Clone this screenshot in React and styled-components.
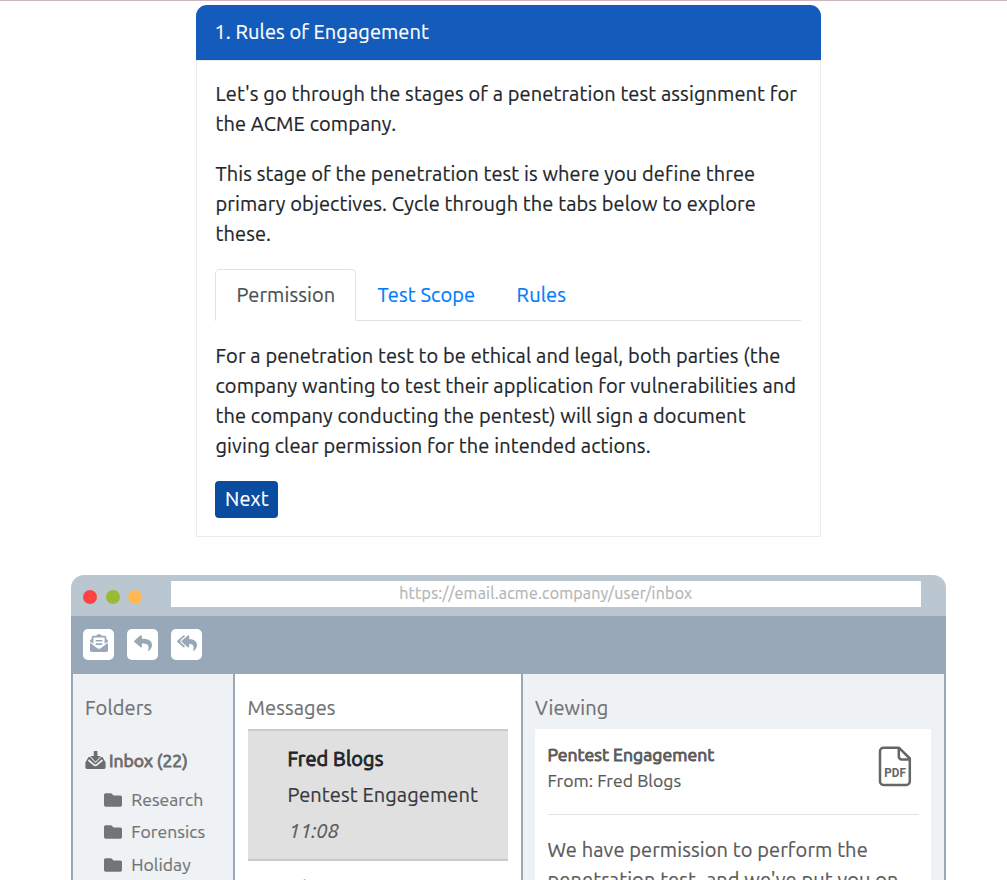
import React from "react";
import styled, { createGlobalStyle, css } from "styled-components";
import { FaEnvelopeOpenText, FaReply, FaReplyAll, FaFolder } from "react-icons/fa";

const GlobalStyle = createGlobalStyle`
  * { box-sizing: border-box; }
  html, body, #root { height: 100%; }
  body {
    margin: 0;
    overflow: hidden;
    background: #fff;
    color: #212529;
    font-family: Ubuntu, "Noto Sans", sans-serif;
    font-size: 20px;
    line-height: 30px;
    letter-spacing: 0.11px;
    -webkit-text-stroke: 0.2px;
  }
`;

const heavy = css`
  font-weight: 400;
  -webkit-text-stroke: 0.9px;
`;

const Page = styled.main`
  height: 880px;
  overflow: hidden;
  border-top: 1px solid #cdb5bd;
  padding-top: 4px;
  display: flex;
  flex-direction: column;
`;

const Card = styled.section`
  flex: none;
  width: 625px;
  height: 532px;
  margin-left: 196px;
  display: flex;
  flex-direction: column;
`;

const CardHeader = styled.header`
  height: 55px;
  padding: 12px 18.5px;
  background: #145cbb;
  color: #fff;
  letter-spacing: 0.08px;
  border-radius: 11px 11px 0 0;
`;

const CardBody = styled.div`
  flex: 1;
  padding: 18px 19px 0 18px;
  border: 1px solid #ebebeb;
`;

const Line = styled.span`
  display: block;
  white-space: nowrap;
`;

const Paragraph = styled.p`
  margin: 0 0 20px 0.5px;
`;

const Tabs = styled.nav`
  display: flex;
  height: 52px;
  margin-bottom: 20px;
  border-bottom: 1px solid #dee2e6;
`;

const Tab = styled.a`
  height: 52px;
  width: ${(p) => p.$width}px;
  padding: 10px 0 0 20.6px;
  color: ${(p) => (p.$active ? "#495057" : "#007bff")};
  border: 1px solid ${(p) => (p.$active ? "#dee2e6" : "transparent")};
  border-bottom-color: ${(p) => (p.$active ? "#fff" : "transparent")};
  border-radius: 5px 5px 0 0;
`;

const NextButton = styled.button`
  display: block;
  width: 63px;
  height: 37px;
  padding: 0 0 1px 10px;
  border: 0;
  border-radius: 4px;
  background: #0a4ca0;
  color: #fff;
  font: inherit;
  letter-spacing: inherit;
  text-align: left;
`;

const Browser = styled.section`
  flex: none;
  width: 875px;
  height: 320px;
  margin: 38px 0 0 71px;
  display: flex;
  flex-direction: column;
`;

const TitleBar = styled.div`
  height: 41px;
  display: flex;
  background: #bbc7d0;
  border-radius: 13px 13px 0 0;
  padding: 6px 25px 9px 12px;
`;

const Dots = styled.div`
  display: flex;
  gap: 8.5px;
  width: 88px;
  padding-top: 9px;
`;

const Dot = styled.i`
  width: 14px;
  height: 14px;
  border-radius: 50%;
  background: ${(p) => p.$color};
`;

const Address = styled.div`
  flex: 1;
  height: 26px;
  padding-left: 228.2px;
  background: #fff;
  color: #b4b4b4;
  font-size: 16px;
  letter-spacing: 0.22px;
  line-height: 25px;
`;

const Toolbar = styled.div`
  height: 58px;
  display: flex;
  gap: 13px;
  padding: 13px 12px;
  background: #98a8b8;
`;

const ToolButton = styled.button`
  width: 31px;
  height: 31px;
  display: flex;
  align-items: center;
  justify-content: center;
  padding: 0 0 3px ${(p) => p.$nudge || 0}px;
  border: 0;
  border-radius: 5px;
  background: #fff;
  color: #98a8b8;
  font-size: ${(p) => p.$size || 18}px;
`;

const Panes = styled.div`
  flex: 1;
  min-height: 0;
  display: flex;
  border: solid #98a8b8;
  border-width: 0 2px;
`;

const Pane = styled.div`
  width: ${(p) => p.$width}px;
  padding: 19px 12px 0;
  background: ${(p) => p.$bg};
  border-right: ${(p) => (p.$last ? 0 : 2)}px solid #98a8b8;
  overflow: hidden;
`;

const PaneTitle = styled.h2`
  margin: 0;
  height: 36px;
  padding-left: ${(p) => p.$inset || 0}px;
  font-size: 20px;
  font-weight: 400;
  color: #6f7174;
`;

const Inbox = styled.div`
  display: flex;
  gap: 3px;
  margin-top: 16px;
  height: 31px;
  align-items: center;
  color: #6c6c6d;
  font-size: 17.6px;
  letter-spacing: 0;
  ${heavy}
`;

const Folder = styled.div`
  display: flex;
  align-items: center;
  gap: 9.6px;
  height: 32.5px;
  padding-left: 18.6px;
  color: #747474;
  font-size: 17.6px;
  letter-spacing: 0.03px;
`;

const FolderList = styled.div`
  margin-top: 7.6px;
`;

const Message = styled.article`
  width: 260px;
  height: 132px;
  margin-left: 1px;
  padding: 10px 0 0 39.5px;
  background: #e0e0e0;
  border: solid #cbcbcb;
  border-width: 2px 0;
  line-height: 36px;
`;

const NextMessage = styled.article`
  margin-left: 1px;
  padding: 10px 0 0 39.5px;
  line-height: 36px;
`;

const Sender = styled.div`
  ${heavy}
`;

const Subject = styled.div`
  color: #36393c;
`;

const Time = styled.div`
  color: #58595a;
  font-style: italic;
  padding-left: 1px;
`;

const Mail = styled.article`
  width: 396px;
  height: 200px;
  padding: 13px 12px 0 12.5px;
  background: #fff;
  color: #5a5a5b;
`;

const MailHead = styled.header`
  display: flex;
  justify-content: space-between;
  height: 73px;
  padding-right: 7px;
  border-bottom: 1px solid #e2e2e2;
  font-size: 17.6px;
  letter-spacing: 0.05px;
  line-height: 26px;

  svg {
    margin-top: 4px;
  }
`;

const MailSubject = styled.div`
  ${heavy}
`;

const MailBody = styled.div`
  padding-top: 20px;
`;

const InboxIcon = () => (
  <svg width="21" height="19" viewBox="0 0 21 19" fill="currentColor">
    <path d="M3.500 6h14L20.600 11.500v5.100q0 1.400-1.400 1.400H1.800Q.4 18 .4 16.600v-5.100z" />
    <path d="M3.400 9l5.300 4.700q1.700 1.400 3.400 0L17.500 9" fill="none" stroke="#eef2f5" strokeWidth="1.700" />
    <path d="M8.800 0h3.600v5h3.400l-5.200 5.700L5.300 5h3.500z" stroke="#eef2f5" strokeWidth="1.600" paintOrder="stroke" />
  </svg>
);

const PdfIcon = () => (
  <svg width="34" height="41" viewBox="0 0 34 41" fill="none" stroke="#656565" strokeWidth="2.500" strokeLinejoin="round">
    <path d="M5.500 1.800h15.600l10.700 10.700v23a3.500 3.500 0 0 1-3.500 3.500H5.500A3.500 3.500 0 0 1 2 35.500V5.300A3.500 3.500 0 0 1 5.500 1.800z" />
    <path d="M20.800 2v8.500a3 3 0 0 0 3 3H32" />
    <text x="6.300" y="30.800" fill="#656565" stroke="none" letterSpacing="0" fontFamily="Roboto, sans-serif" fontWeight="700" fontSize="13" textLength="21.500" lengthAdjust="spacingAndGlyphs">PDF</text>
  </svg>
);

export default function App() {
  return (
    <>
      <GlobalStyle />
      <Page>
        <Card>
          <CardHeader><Line>1. Rules of Engagement</Line></CardHeader>
          <CardBody>
            <Paragraph>
              <Line>Let's go through the stages of a penetration test assignment for</Line>
              <Line>the ACME company.</Line>
            </Paragraph>
            <Paragraph>
              <Line>This stage of the penetration test is where you define three</Line>
              <Line>primary objectives. Cycle through the tabs below to explore</Line>
              <Line>these.</Line>
            </Paragraph>
            <Tabs>
              <Tab $active $width={141}><Line>Permission</Line></Tab>
              <Tab $width={139}><Line>Test Scope</Line></Tab>
              <Tab $width={92}><Line>Rules</Line></Tab>
            </Tabs>
            <Paragraph>
              <Line>For a penetration test to be ethical and legal, both parties (the</Line>
              <Line>company wanting to test their application for vulnerabilities and</Line>
              <Line>the company conducting the pentest) will sign a document</Line>
              <Line>giving clear permission for the intended actions.</Line>
            </Paragraph>
            <NextButton><Line>Next</Line></NextButton>
          </CardBody>
        </Card>
        <Browser>
          <TitleBar>
            <Dots>
              <Dot $color="#ff4343" />
              <Dot $color="#9aba33" />
              <Dot $color="#ffb854" />
            </Dots>
            <Address><Line>https://email.acme.company/user/inbox</Line></Address>
          </TitleBar>
          <Toolbar>
            <ToolButton $nudge={1}><FaEnvelopeOpenText /></ToolButton>
            <ToolButton><FaReply /></ToolButton>
            <ToolButton $size={20}><FaReplyAll /></ToolButton>
          </Toolbar>
          <Panes>
            <Pane $width={162} $bg="#eef2f5">
              <PaneTitle><Line>Folders</Line></PaneTitle>
              <Inbox><InboxIcon /><Line>Inbox (22)</Line></Inbox>
              <FolderList>
                <Folder><FaFolder size={18} /><Line>Research</Line></Folder>
                <Folder><FaFolder size={18} /><Line>Forensics</Line></Folder>
                <Folder><FaFolder size={18} /><Line>Holiday</Line></Folder>
              </FolderList>
            </Pane>
            <Pane $width={288} $bg="#fff">
              <PaneTitle $inset={0.5}><Line>Messages</Line></PaneTitle>
              <Message>
                <Sender><Line>Fred Blogs</Line></Sender>
                <Subject><Line>Pentest Engagement</Line></Subject>
                <Time><Line>11:08</Line></Time>
              </Message>
              <NextMessage>
                <Sender><Line>Nina</Line></Sender>
              </NextMessage>
            </Pane>
            <Pane $width={421} $bg="#eef2f5" $last>
              <PaneTitle><Line>Viewing</Line></PaneTitle>
              <Mail>
                <MailHead>
                  <div>
                    <MailSubject><Line>Pentest Engagement</Line></MailSubject>
                    <Line>From: Fred Blogs</Line>
                  </div>
                  <PdfIcon />
                </MailHead>
                <MailBody>
                  <Line>We have permission to perform the</Line>
                  <Line>penetration test, and we've put you on</Line>
                </MailBody>
              </Mail>
            </Pane>
          </Panes>
        </Browser>
      </Page>
    </>
  );
}
